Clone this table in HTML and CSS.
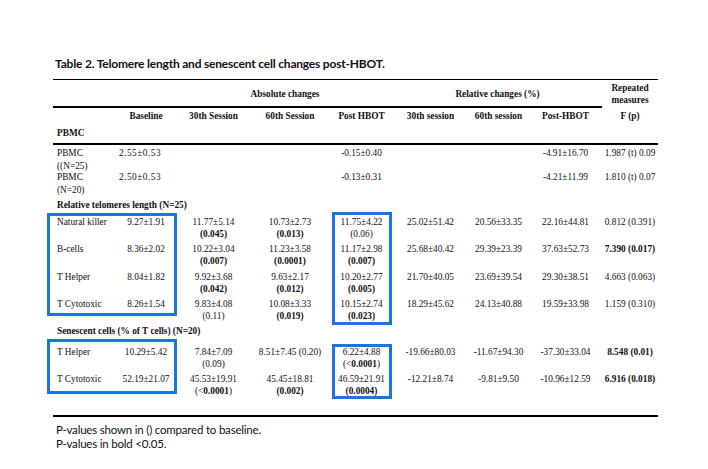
FILE: index.html
```html
<!DOCTYPE html>
<html lang="en">
<head>
<meta charset="utf-8">
<title>Table 2</title>
<link rel="stylesheet" href="styles.css">
</head>
<body>
<h1 class="title">Table 2. Telomere length and senescent cell changes post-HBOT.</h1>
<div class="stack">
  <div class="tgrid table">
    <div class="rule full"></div>

    <div class="row group">
      <div class="c span2"></div>
      <div class="c span3 b">Absolute changes</div>
      <div class="c span3 b">Relative changes (%)</div>
      <div class="c b">Repeated<br>measures</div>
    </div>

    <div class="rule part"></div>
    <div class="blank"></div>

    <div class="row head b">
      <div class="c"></div>
      <div class="c">Baseline</div>
      <div class="c">30th Session</div>
      <div class="c">60th Session</div>
      <div class="c">Post HBOT</div>
      <div class="c">30th session</div>
      <div class="c">60th session</div>
      <div class="c">Post-HBOT</div>
      <div class="c">F (p)</div>
    </div>

    <div class="c section sec-pbmc b">PBMC</div>
    <div class="rule full"></div>

    <div class="row pbmc">
      <div class="c lab">PBMC<br>((N=25)</div>
      <div class="c base">2.55±0.53</div>
      <div class="c"></div>
      <div class="c"></div>
      <div class="c">-0.15±0.40</div>
      <div class="c"></div>
      <div class="c"></div>
      <div class="c">-4.91±16.70</div>
      <div class="c">1.987 (t) 0.09</div>
    </div>
    <div class="row pbmc">
      <div class="c lab">PBMC<br>(N=20)</div>
      <div class="c base">2.50±0.53</div>
      <div class="c"></div>
      <div class="c"></div>
      <div class="c">-0.13±0.31</div>
      <div class="c"></div>
      <div class="c"></div>
      <div class="c">-4.21±11.99</div>
      <div class="c">1.810 (t) 0.07</div>
    </div>

    <div class="c section b">Relative telomeres length (N=25)</div>

    <div class="row tel">
      <div class="c lab">Natural killer</div>
      <div class="c">9.27±1.91</div>
      <div class="c">11.77±5.14<br><b>(0.045)</b></div>
      <div class="c">10.73±2.73<br><b>(0.013)</b></div>
      <div class="c">11.75±4.22<br>(0.06)</div>
      <div class="c">25.02±51.42</div>
      <div class="c">20.56±33.35</div>
      <div class="c">22.16±44.81</div>
      <div class="c">0.812 (0.391)</div>
    </div>
    <div class="row tel">
      <div class="c lab">B-cells</div>
      <div class="c">8.36±2.02</div>
      <div class="c">10.22±3.04<br><b>(0.007)</b></div>
      <div class="c">11.23±3.58<br><b>(0.0001)</b></div>
      <div class="c">11.17±2.98<br><b>(0.007)</b></div>
      <div class="c">25.68±40.42</div>
      <div class="c">29.39±23.39</div>
      <div class="c">37.63±52.73</div>
      <div class="c b">7.390 (0.017)</div>
    </div>
    <div class="row tel">
      <div class="c lab">T Helper</div>
      <div class="c">8.04±1.82</div>
      <div class="c">9.92±3.68<br><b>(0.042)</b></div>
      <div class="c">9.63±2.17<br><b>(0.012)</b></div>
      <div class="c">10.20±2.77<br><b>(0.005)</b></div>
      <div class="c">21.70±40.05</div>
      <div class="c">23.69±39.54</div>
      <div class="c">29.30±38.51</div>
      <div class="c">4.663 (0.063)</div>
    </div>
    <div class="row tel">
      <div class="c lab">T Cytotoxic</div>
      <div class="c">8.26±1.54</div>
      <div class="c">9.83±4.08<br>(0.11)</div>
      <div class="c">10.08±3.33<br><b>(0.019)</b></div>
      <div class="c">10.15±2.74<br><b>(0.023)</b></div>
      <div class="c">18.29±45.62</div>
      <div class="c">24.13±40.88</div>
      <div class="c">19.59±33.98</div>
      <div class="c">1.159 (0.310)</div>
    </div>

    <div class="c section b">Senescent cells (% of T cells) (N=20)</div>

    <div class="row sen">
      <div class="c lab">T Helper</div>
      <div class="c">10.29±5.42</div>
      <div class="c">7.84±7.09<br>(0.09)</div>
      <div class="c">8.51±7.45 (0.20)</div>
      <div class="c">6.22±4.88<br>(&lt;<b>0.0001</b>)</div>
      <div class="c">-19.66±80.03</div>
      <div class="c">-11.67±94.30</div>
      <div class="c">-37.30±33.04</div>
      <div class="c b">8.548 (0.01)</div>
    </div>
    <div class="row sen">
      <div class="c lab">T Cytotoxic</div>
      <div class="c">52.19±21.07</div>
      <div class="c">45.53±19.91<br>(&lt;<b>0.0001</b>)</div>
      <div class="c">45.45±18.81<br><b>(0.002)</b></div>
      <div class="c">46.59±21.91<br><b>(0.0004)</b></div>
      <div class="c">-12.21±8.74</div>
      <div class="c">-9.81±9.50</div>
      <div class="c">-10.96±12.59</div>
      <div class="c b">6.916 (0.018)</div>
    </div>

    <div class="spacer"></div>
    <div class="rule full"></div>
  </div>

  <div class="tgrid overlay">
    <div class="hl hl-1"></div>
    <div class="hl hl-2"></div>
    <div class="hl hl-3"></div>
    <div class="hl hl-4"></div>
  </div>
</div>
<p class="note">P-values shown in () compared to baseline.<br>P-values in bold &lt;0.05.</p>
</body>
</html>
```

FILE: styles.css
```css
html, body {
  margin: 0;
  background: #ffffff;
}

body {
  padding: 56px 0 0 53px;
  color: #000;
}

.title {
  margin: 0 0 6.5px 2px;
  font-family: "Lato", "Liberation Sans", sans-serif;
  font-weight: 700;
  font-size: 12px;
  letter-spacing: -0.2px;
  line-height: 16px;
  color: #111;
}

.stack {
  display: grid;
  width: 605px;
}

.stack > * {
  grid-area: 1 / 1;
}

.tgrid {
  display: grid;
  grid-template-columns: 62px 62px 73px 80px 63px 75px 61px 73px 56px;
  grid-template-rows:
    1.5px 26px 1.5px 17.5px 18px 1.5px
    24.5px 27px 17px
    27px 28px 27px 27px
    18px 27px 27px 21px 1.5px;
}

.table {
  font-family: "Liberation Serif", "Times New Roman", serif;
  font-size: 9.3px;
  line-height: 12px;
  color: #111;
}

.row {
  display: contents;
}

.c {
  text-align: center;
  white-space: nowrap;
}

.b,
.table b {
  font-weight: 700;
}

.rule {
  background: #000;
}

.full {
  grid-column: 1 / -1;
}

.part {
  grid-column: 1 / 9;
}

.span2 {
  grid-column: span 2;
}

.span3 {
  grid-column: span 3;
}

.group > .c {
  align-self: center;
  padding-top: 2px;
  line-height: 12.5px;
}

.head > .c {
  align-self: center;
}

.section {
  grid-column: 1 / -1;
  text-align: left;
  padding-left: 4px;
  align-self: center;
}

.sec-pbmc {
  padding-bottom: 2px;
}

.lab {
  text-align: left;
  padding-left: 4px;
}

.pbmc > .c {
  padding-top: 2px;
  line-height: 13px;
}

.pbmc > .base {
  text-align: left;
  padding-left: 4px;
  letter-spacing: 0.5px;
}

.tel > .c {
  padding-top: 3px;
}

.sen > .c {
  padding-top: 6px;
}

.spacer {
  grid-column: 1 / -1;
}

.overlay {
  pointer-events: none;
}

.hl {
  border: 3px solid #1b74e4;
  box-sizing: border-box;
}

.hl-1 {
  grid-row: 10 / 14;
  grid-column: 1 / 3;
  margin: 0 0 6px -6px;
}

.hl-2 {
  grid-row: 10 / 14;
  grid-column: 5 / 6;
  margin: -1px 1px -3px 2px;
}

.hl-3 {
  grid-row: 15 / 17;
  grid-column: 1 / 3;
  margin: -1px 0 0 -6px;
}

.hl-4 {
  grid-row: 15 / 17;
  grid-column: 5 / 6;
  margin: 4px 1px -5px 2px;
}

.note {
  margin: 6.5px 0 0 3px;
  font-family: "Lato", "Liberation Sans", sans-serif;
  font-size: 11.5px;
  letter-spacing: -0.2px;
  line-height: 14px;
  color: #111;
}
```
